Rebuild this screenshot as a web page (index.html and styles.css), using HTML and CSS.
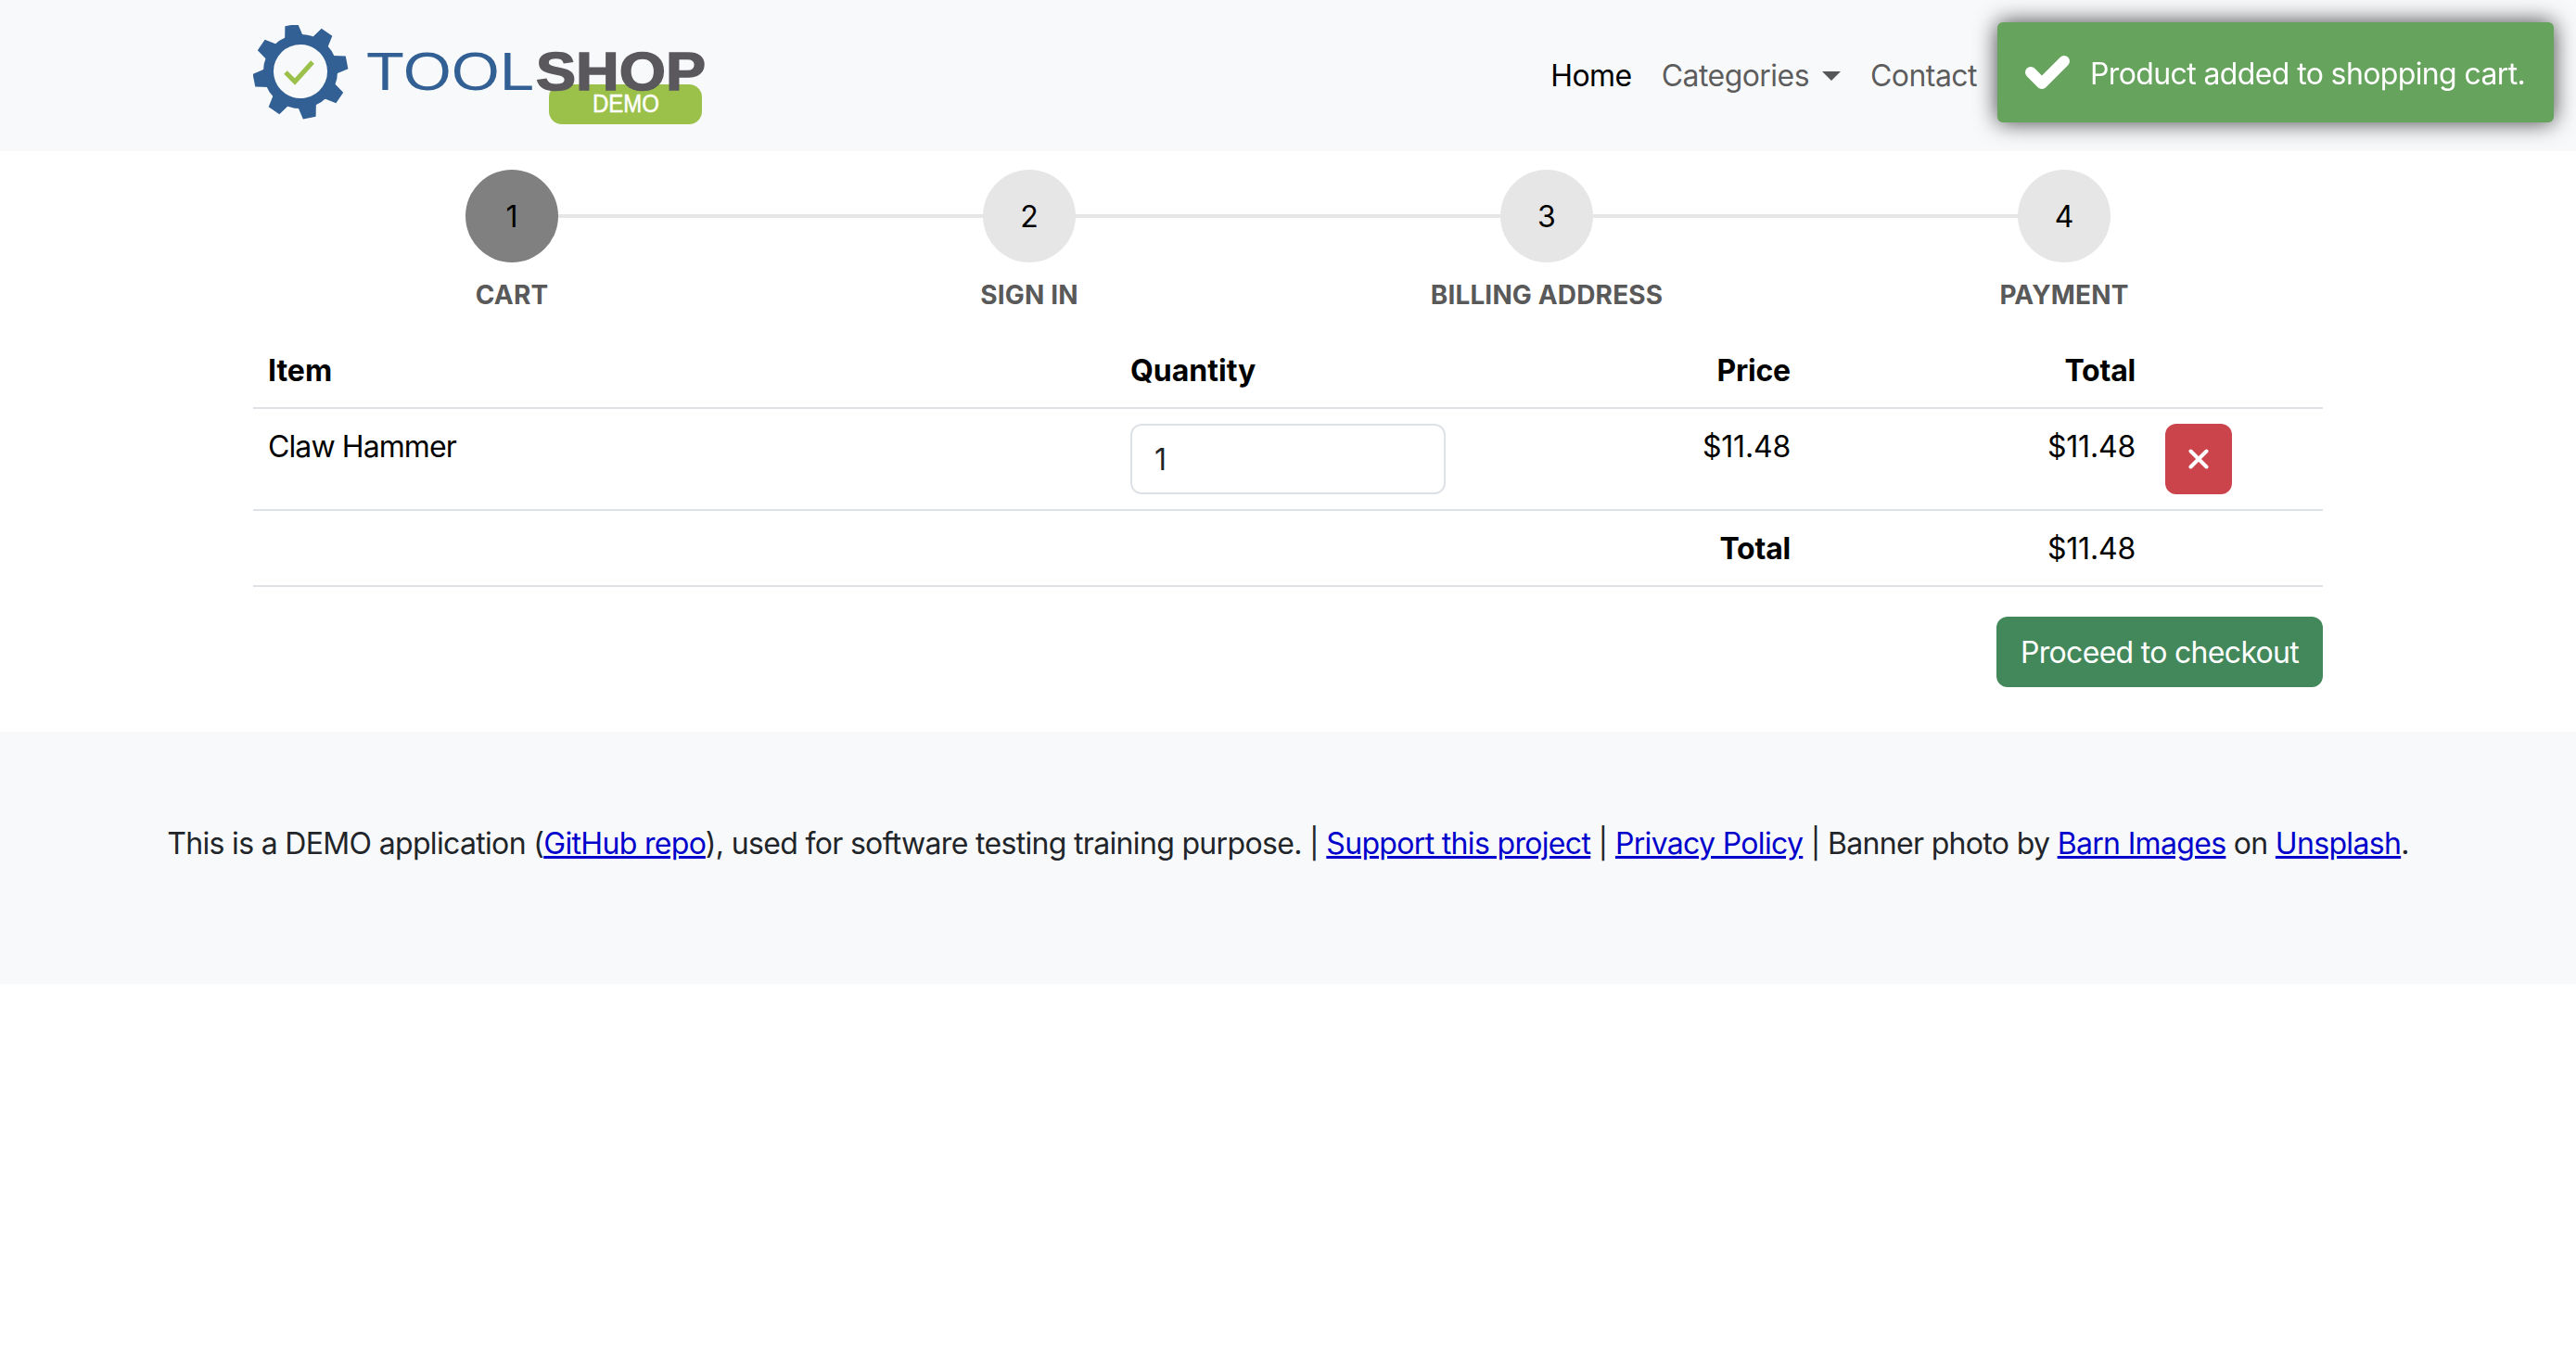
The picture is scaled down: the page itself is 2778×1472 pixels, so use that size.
FILE: index.html
```html
<!DOCTYPE html>
<html lang="en">
<head>
    <meta charset="UTF-8">
    <title>Checkout - Toolshop</title>
    <link rel="stylesheet" href="styles.css">
</head>
<body>
    <nav class="navbar">
        <div class="container navbar-inner">
            <a class="brand" href="#">
                <svg class="logo" viewBox="0 0 490 108" width="490" height="108">
                    <g fill="#326094" transform="translate(51 50) rotate(-11)">
                        <circle r="34.5" fill="none" stroke="#326094" stroke-width="11"/>
                        <path d="M-10-37L-7-51L7-51L10-37Z"/>
                        <path transform="rotate(45)" d="M-10-37L-7-51L7-51L10-37Z"/>
                        <path transform="rotate(90)" d="M-10-37L-7-51L7-51L10-37Z"/>
                        <path transform="rotate(135)" d="M-10-37L-7-51L7-51L10-37Z"/>
                        <path transform="rotate(180)" d="M-10-37L-7-51L7-51L10-37Z"/>
                        <path transform="rotate(225)" d="M-10-37L-7-51L7-51L10-37Z"/>
                        <path transform="rotate(270)" d="M-10-37L-7-51L7-51L10-37Z"/>
                        <path transform="rotate(315)" d="M-10-37L-7-51L7-51L10-37Z"/>
                    </g>
                    <path d="M35 51L45 61L64 40" fill="none" stroke="#9bc14b" stroke-width="5"/>
                    <rect x="319" y="64" width="165" height="43" rx="14" fill="#9bc14b"/>
                    <text class="logo-tool" x="122" y="70" textLength="181" lengthAdjust="spacingAndGlyphs">TOOL</text>
                    <text class="logo-shop" x="305" y="70" textLength="183" lengthAdjust="spacingAndGlyphs">SHOP</text>
                    <text class="logo-demo" x="366" y="94" textLength="72" lengthAdjust="spacingAndGlyphs">DEMO</text>
                </svg>
            </a>
            <ul class="nav-links">
                <li><a class="nav-link active" href="#">Home</a></li>
                <li><a class="nav-link dropdown-toggle" href="#">Categories</a></li>
                <li><a class="nav-link" href="#">Contact</a></li>
            </ul>
        </div>
    </nav>

    <main class="container">
        <ol class="steps">
            <li class="step current"><span class="step-num">1</span><span class="step-label">Cart</span></li>
            <li class="step"><span class="step-num">2</span><span class="step-label">Sign in</span></li>
            <li class="step"><span class="step-num">3</span><span class="step-label">Billing Address</span></li>
            <li class="step"><span class="step-num">4</span><span class="step-label">Payment</span></li>
        </ol>

        <table class="cart-table">
            <colgroup>
                <col class="col-item">
                <col class="col-num">
                <col class="col-num">
                <col class="col-num">
                <col class="col-action">
            </colgroup>
            <thead>
                <tr>
                    <th>Item</th>
                    <th>Quantity</th>
                    <th class="text-end">Price</th>
                    <th class="text-end">Total</th>
                    <th></th>
                </tr>
            </thead>
            <tbody>
                <tr>
                    <td class="item-name">Claw Hammer</td>
                    <td class="cell-control"><input class="quantity" type="number" value="1" min="1"></td>
                    <td class="text-end">$11.48</td>
                    <td class="text-end">$11.48</td>
                    <td class="cell-control">
                        <a class="btn btn-danger" href="#" aria-label="Remove">
                            <svg viewBox="0 0 22 22" width="22" height="22"><path d="M2.5 2.5L19.5 19.5M19.5 2.5L2.5 19.5" fill="none" stroke="#fff" stroke-width="4" stroke-linecap="round"/></svg>
                        </a>
                    </td>
                </tr>
            </tbody>
            <tfoot>
                <tr>
                    <td></td>
                    <td></td>
                    <th class="text-end">Total</th>
                    <td class="text-end">$11.48</td>
                    <td></td>
                </tr>
            </tfoot>
        </table>

        <div class="checkout-row">
            <a class="btn btn-success" href="#">Proceed to checkout</a>
        </div>
    </main>

    <footer class="footer">
        <p>This is a DEMO application (<a href="#">GitHub repo</a>), used for software testing training purpose. | <a href="#">Support this project</a> | <a href="#">Privacy Policy</a> | Banner photo by <a href="#">Barn Images</a> on <a href="#">Unsplash</a>.</p>
    </footer>

    <div class="toast">
        <svg class="toast-icon" viewBox="0 0 48 36" width="48" height="36"><path d="M6 18L18 30L42 6" fill="none" stroke="#fff" stroke-width="12" stroke-linecap="round" stroke-linejoin="round"/></svg>
        <span class="toast-text">Product added to shopping cart.</span>
    </div>
</body>
</html>
```

FILE: styles.css
```css
* {
    box-sizing: border-box;
}

body {
    margin: 0;
    font-family: Inter, "Liberation Sans", sans-serif;
    font-size: 32px;
    line-height: 1.5;
    color: #212529;
    background: #fff;
}

a {
    color: #0000cc;
}

.container {
    width: 2280px;
    margin: 0 auto;
    padding: 0 24px;
}

/* Navbar */
.navbar {
    background: #f8f9fa;
}

.navbar-inner {
    display: flex;
    align-items: center;
    justify-content: space-between;
    padding-top: 27px;
    padding-bottom: 28px;
}

.brand,
.logo {
    display: block;
}

.logo-tool,
.logo-shop,
.logo-demo {
    font-family: "Liberation Sans", sans-serif;
}

.logo-tool {
    font-size: 58px;
    fill: #326094;
}

.logo-shop {
    font-size: 58px;
    font-weight: 700;
    fill: #5a585c;
    stroke: #5a585c;
    stroke-width: 1.5px;
}

.logo-demo {
    font-size: 27px;
    fill: #fff;
    stroke: #fff;
    stroke-width: 0.5px;
}

.nav-links {
    display: flex;
    margin: 0;
    padding: 0 357px 0 0;
    list-style: none;
}

.nav-link {
    display: block;
    padding: 17px 16px 15px;
    color: rgba(0, 0, 0, 0.65);
    text-decoration: none;
    letter-spacing: -0.55px;
}

.nav-link.active {
    color: #000;
}

.dropdown-toggle::after {
    content: '';
    display: inline-block;
    margin-left: 14px;
    vertical-align: 6px;
    border-top: 10px solid;
    border-right: 10px solid transparent;
    border-left: 10px solid transparent;
}

/* Checkout steps */
.steps {
    display: flex;
    margin: 20px 0 0;
    padding: 0;
    list-style: none;
}

.step {
    position: relative;
    flex: 1;
    display: flex;
    flex-direction: column;
    align-items: center;
}

.step:not(:last-child)::after {
    content: '';
    position: absolute;
    top: 48px;
    left: 50%;
    width: 100%;
    height: 4px;
    background: #e6e6e6;
}

.step-num {
    position: relative;
    z-index: 1;
    width: 100px;
    height: 100px;
    border-radius: 50%;
    background: #e6e6e6;
    color: #000;
    text-align: center;
    line-height: 102px;
}

.step.current .step-num {
    background: #808080;
}

.step-label {
    margin-top: 15px;
    font-size: 28px;
    line-height: 40px;
    font-weight: 700;
    letter-spacing: 0.15px;
    color: #595959;
    text-transform: uppercase;
}

/* Cart table */
.cart-table {
    width: 100%;
    margin-top: 21px;
    table-layout: fixed;
    border-collapse: collapse;
    color: #000;
}

.col-item {
    width: 930px;
}

.col-num {
    width: 372px;
}

.col-action {
    width: 186px;
}

.cart-table th,
.cart-table td {
    padding: 17px 16px 15px;
    text-align: left;
    vertical-align: top;
    font-weight: 400;
    border-bottom: 2px solid #dee2e6;
}

.cart-table th {
    font-weight: 700;
}

.cart-table .text-end {
    text-align: right;
    letter-spacing: -0.2px;
}

.cart-table .item-name {
    letter-spacing: -0.9px;
}

.cart-table .cell-control {
    padding: 16px;
}

.quantity {
    display: block;
    width: 340px;
    height: 76px;
    padding: 12px 24px;
    font: inherit;
    color: #212529;
    background: #fff;
    border: 2px solid #dee2e6;
    border-radius: 12px;
    appearance: textfield;
}

.btn {
    display: inline-block;
    padding: 13px 24px 11px;
    border: 2px solid transparent;
    border-radius: 12px;
    color: #fff;
    text-decoration: none;
}

.btn-danger {
    display: flex;
    align-items: center;
    justify-content: center;
    width: 72px;
    height: 76px;
    padding: 0;
    background: #cb444b;
}

.btn-success {
    background: #43885b;
    letter-spacing: -0.7px;
}

.checkout-row {
    display: flex;
    justify-content: flex-end;
    margin-top: 32px;
    margin-bottom: 48px;
}

/* Footer */
.footer {
    padding: 97px 0 95px;
    background: #f8f9fa;
    text-align: center;
    letter-spacing: -0.67px;
}

.footer p {
    margin: 0 0 32px;
}

/* Toast */
.toast {
    position: fixed;
    top: 24px;
    right: 24px;
    display: flex;
    align-items: center;
    gap: 22px;
    width: 600px;
    padding: 30px;
    border-radius: 6px;
    background: #66a35c;
    color: #fff;
    box-shadow: 0 0 24px rgba(0, 0, 0, 0.75);
}

.toast-icon {
    flex: none;
}

.toast-text {
    padding-top: 2px;
    margin-bottom: -2px;
    white-space: nowrap;
    letter-spacing: -0.62px;
}
```
